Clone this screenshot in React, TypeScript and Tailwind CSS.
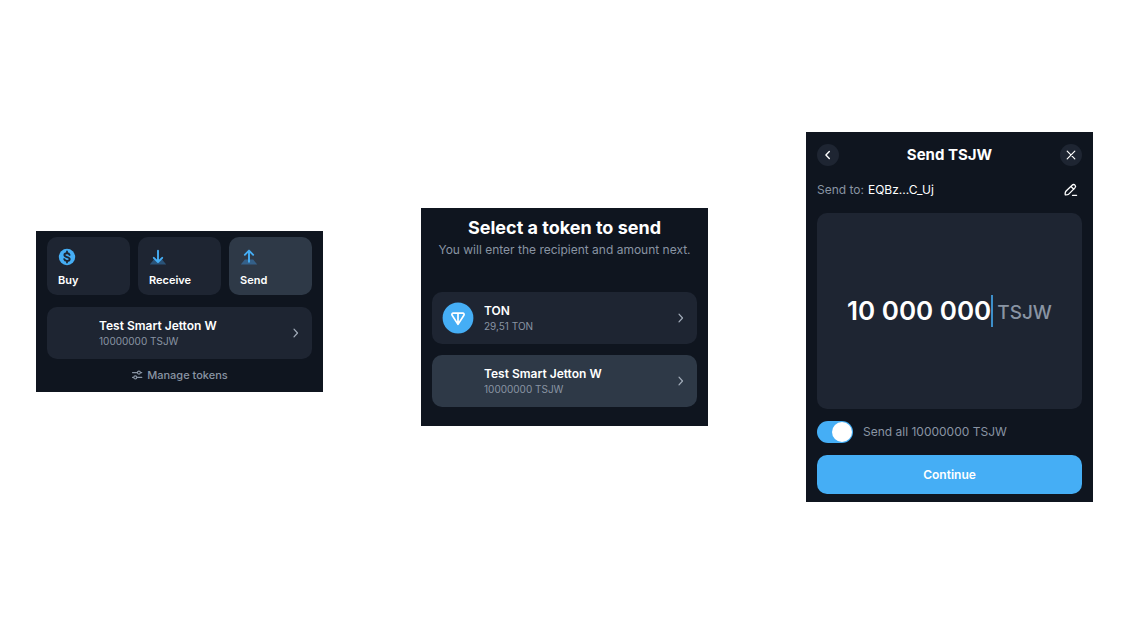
import { useState } from 'react';
import type { ReactNode } from 'react';

interface PanelProps {
  label: string;
  className?: string;
  children: ReactNode;
}

const Panel = ({ label, className = '', children }: PanelProps) => (
  <section
    aria-label={label}
    className={`flex min-w-0 flex-col bg-[#0f151f] px-[11px] ${className}`}
  >
    {children}
  </section>
);

const BuyIcon = () => (
  <svg viewBox="0 0 18 18" className="h-[18px] w-[18px]" aria-hidden="true">
    <circle cx="9" cy="9" r="8.2" fill="#45aef5" />
    <path
      d="M11.6 6.9C11.3 5.8 10.3 5.2 9 5.200 7.500 5.200 6.400 5.900 6.400 7.100c0 2.600 5.300 1.300 5.300 3.900 0 1.200-1.200 1.900-2.700 1.900-1.500 0-2.500-.7-2.800-1.800"
      fill="none"
      stroke="#1e2532"
      strokeWidth="1.900"
      strokeLinecap="round"
    />
    <path
      d="M9 3.500v1.700M9 12.900v1.600"
      stroke="#1e2532"
      strokeWidth="1.800"
      strokeLinecap="round"
    />
  </svg>
);

const ReceiveIcon = () => (
  <svg viewBox="0 0 18 18" className="h-[18px] w-[18px]" aria-hidden="true">
    <path d="M4.800 11.500h8.400l4 5H.8z" fill="#2a5378" />
    <path
      d="M9 2.800v11M4.800 9.800 9 14l4.200-4.200"
      fill="none"
      stroke="#45aef5"
      strokeWidth="1.900"
      strokeLinecap="round"
      strokeLinejoin="round"
    />
  </svg>
);

const SendIcon = () => (
  <svg viewBox="0 0 18 18" className="h-[18px] w-[18px]" aria-hidden="true">
    <path d="M4.800 11.500h8.400l4 5H.8z" fill="#346089" />
    <path
      d="M9 13.800V2.600M4.800 6.800 9 2.600l4.200 4.200"
      fill="none"
      stroke="#45aef5"
      strokeWidth="1.900"
      strokeLinecap="round"
      strokeLinejoin="round"
    />
  </svg>
);

const TonIcon = () => (
  <svg viewBox="0 0 32 32" className="h-8 w-8" aria-hidden="true">
    <circle cx="16" cy="16" r="15.400" fill="#45aef5" />
    <path
      d="M11.200 11.200h9.600c1.100 0 1.700 1.100 1.100 2L16 22.400l-5.900-9.200c-.6-.9 0-2 1.100-2zM16 11.400v10.800"
      fill="none"
      stroke="#fff"
      strokeWidth="1.700"
      strokeLinejoin="round"
    />
  </svg>
);

const ChevronIcon = () => (
  <svg viewBox="0 0 12 12" className="h-3 w-3 shrink-0" aria-hidden="true">
    <path
      d="M4 2.200 7.500 6 4 9.800"
      fill="none"
      stroke="#a3adba"
      strokeWidth="1.200"
      strokeLinecap="round"
      strokeLinejoin="round"
    />
  </svg>
);

const SlidersIcon = () => (
  <svg
    viewBox="0 0 12 12"
    className="h-3 w-3"
    fill="none"
    stroke="currentColor"
    strokeWidth="1.100"
    strokeLinecap="round"
    aria-hidden="true"
  >
    <path d="M1.500 3.600h4.700M9.600 3.600h1.200M1.500 8.400h1.100M6 8.400h4.800" />
    <circle cx="7.900" cy="3.600" r="1.500" />
    <circle cx="4.300" cy="8.400" r="1.500" />
  </svg>
);

const PencilIcon = () => (
  <svg
    viewBox="0 0 14 14"
    className="h-[14px] w-[14px]"
    fill="none"
    stroke="currentColor"
    strokeWidth="1.300"
    strokeLinecap="round"
    strokeLinejoin="round"
    aria-hidden="true"
  >
    <path d="M8.100 2.200c.9-.9 2.100-.9 2.900-.1s.7 1.900-.1 2.800L5 10.900c-.5.5-1 .7-1.600.8l-1.700.2c-.4 0-.7-.3-.6-.7l.2-1.600c.1-.6.4-1.100.8-1.600zM7 3.500l2.800 2.800M8.500 12.300h4.100" />
  </svg>
);

interface ActionButtonProps {
  label: string;
  icon: ReactNode;
  active?: boolean;
}

const ActionButton = ({ label, icon, active = false }: ActionButtonProps) => (
  <button
    type="button"
    className={`flex h-[58px] flex-col items-start justify-between rounded-[10px] px-[11px] pt-[11px] pb-2 text-[11px] leading-[14px] font-semibold text-white ${
      active ? 'bg-[#2e3947]' : 'bg-[#1e2532]'
    }`}
  >
    {icon}
    {label}
  </button>
);

interface TokenRowProps {
  name: string;
  balance: string;
  icon?: ReactNode;
  active?: boolean;
}

const TokenRow = ({ name, balance, icon, active = false }: TokenRowProps) => (
  <button
    type="button"
    className={`flex h-[52px] w-full items-center gap-[10px] rounded-[10px] px-[10px] text-left ${
      active ? 'bg-[#2e3947]' : 'bg-[#1e2532]'
    }`}
  >
    <span className="h-8 w-8 shrink-0">{icon}</span>
    <span className="flex min-w-0 flex-1 flex-col">
      <span className="truncate text-[12px] leading-4 font-semibold text-white">
        {name}
      </span>
      <span className="truncate text-[10px] leading-[14px] text-[#8994a3]">
        {balance}
      </span>
    </span>
    <ChevronIcon />
  </button>
);

const HomePanel = () => (
  <Panel label="Wallet" className="mb-[11px] pt-[6px] pb-[9px]">
    <div className="grid grid-cols-3 gap-2">
      <ActionButton label="Buy" icon={<BuyIcon />} />
      <ActionButton label="Receive" icon={<ReceiveIcon />} />
      <ActionButton label="Send" icon={<SendIcon />} active />
    </div>
    <div className="mt-3">
      <TokenRow name="Test Smart Jetton W" balance="10000000 TSJW" />
    </div>
    <button
      type="button"
      className="mt-2 flex items-center gap-1 self-center text-[11px] leading-4 font-medium text-[#8994a3]"
    >
      <SlidersIcon />
      Manage tokens
    </button>
  </Panel>
);

const SelectTokenPanel = () => (
  <Panel label="Select token" className="pt-2 pb-[19px]">
    <h2 className="text-center text-[18px] leading-6 font-bold text-white">
      Select a token to send
    </h2>
    <p className="mt-[2px] text-center text-[12px] leading-4 whitespace-nowrap text-[#8994a3]">
      You will enter the recipient and amount next.
    </p>
    <div className="mt-[34px] flex flex-col gap-[11px]">
      <TokenRow name="TON" balance="29,51 TON" icon={<TonIcon />} />
      <TokenRow name="Test Smart Jetton W" balance="10000000 TSJW" active />
    </div>
  </Panel>
);

const SendPanel = () => {
  const [amount, setAmount] = useState('10 000 000');
  const [sendAll, setSendAll] = useState(true);

  return (
    <Panel label="Send" className="pt-3 pb-2">
      <header className="flex items-center justify-between">
        <button
          type="button"
          aria-label="Back"
          className="flex h-[22px] w-[22px] items-center justify-center rounded-full bg-[#1e2532] text-white"
        >
          <svg viewBox="0 0 12 12" className="h-3 w-3" aria-hidden="true">
            <path
              d="M7.300 2.500 3.900 6l3.400 3.500"
              fill="none"
              stroke="currentColor"
              strokeWidth="1.400"
              strokeLinecap="round"
              strokeLinejoin="round"
            />
          </svg>
        </button>
        <h2 className="text-[15px] leading-5 font-bold text-white">Send TSJW</h2>
        <button
          type="button"
          aria-label="Close"
          className="flex h-[22px] w-[22px] items-center justify-center rounded-full bg-[#1e2532] text-white"
        >
          <svg viewBox="0 0 12 12" className="h-3 w-3" aria-hidden="true">
            <path
              d="m2.200 2.200 7.600 7.600m0-7.600L2.200 9.800"
              stroke="currentColor"
              strokeWidth="1.200"
              strokeLinecap="round"
            />
          </svg>
        </button>
      </header>

      <div className="mt-4 flex items-center gap-1 text-[12px] leading-4">
        <span className="text-[#8994a3]">Send to:</span>
        <span className="text-white">EQBz...C_Uj</span>
        <button
          type="button"
          aria-label="Edit recipient"
          className="mr-1 ml-auto text-white"
        >
          <PencilIcon />
        </button>
      </div>

      <div className="mt-[15px] flex h-[196px] items-center justify-center rounded-[10px] bg-[#1e2532]">
        <input
          aria-label="Amount"
          value={amount}
          onChange={(e) => setAmount(e.target.value)}
          className="field-sizing-content bg-transparent text-[26px] leading-8 font-semibold text-white outline-none"
        />
        <span className="h-8 w-0.5 shrink-0 bg-[#3d8fca]" />
        <span className="ml-1 pt-1 text-[19px] leading-6 font-medium text-[#8994a3]">
          TSJW
        </span>
      </div>

      <label className="mt-3 flex items-center gap-[10px] text-[12px] leading-[22px] text-[#8994a3]">
        <input
          type="checkbox"
          role="switch"
          checked={sendAll}
          onChange={(e) => setSendAll(e.target.checked)}
          className="flex h-[22px] w-9 shrink-0 appearance-none items-center rounded-full bg-[#1e2532] p-px before:h-5 before:w-5 before:rounded-full before:bg-white checked:justify-end checked:bg-[#45aef5]"
        />
        Send all 10000000 TSJW
      </label>

      <button
        type="button"
        className="mt-3 h-[39px] w-full rounded-[10px] bg-[#45aef5] text-[12px] leading-4 font-semibold text-white"
      >
        Continue
      </button>
    </Panel>
  );
};

const App = () => (
  <main className="grid min-h-screen grid-cols-3 items-center gap-[98px] bg-white pr-[35px] pl-9 font-['Inter',sans-serif]">
    <HomePanel />
    <SelectTokenPanel />
    <SendPanel />
  </main>
);

export default App;
